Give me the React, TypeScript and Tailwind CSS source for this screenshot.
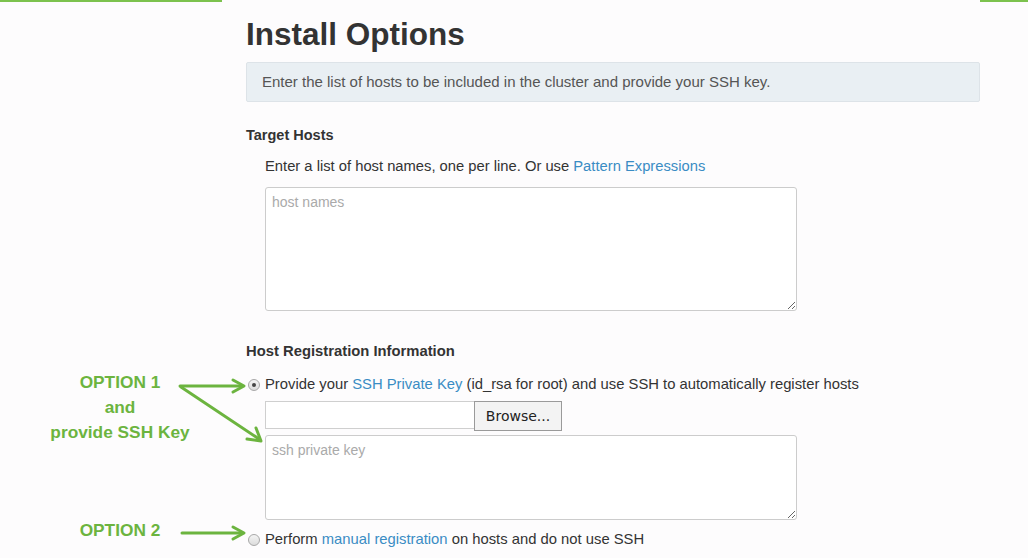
import React from "react";

function Radio({ checked }: { checked?: boolean }) {
  return (
    <span className="mt-[1px] flex h-[12px] w-[12px] shrink-0 items-center justify-center rounded-full border border-[#a8a8a8] bg-gradient-to-b from-[#f4f4f4] to-[#dcdcdc]">
      {checked && <span className="h-[4px] w-[4px] rounded-full bg-[#444]" />}
    </span>
  );
}

export default function App() {
  return (
    <div className="relative min-h-[558px] w-[1028px] overflow-hidden bg-[#fdfcfd] font-['Liberation_Sans',Arial,sans-serif] text-[#333]">
      <div className="flex justify-between">
        <div className="h-[2px] w-[222px] bg-[#7cc24e]" />
        <div className="h-[2px] w-[48px] bg-[#7cc24e]" />
      </div>

      <div className="grid grid-cols-[246px_734px]">
        <div />
        <div>
          <h1 className="mt-[14px] text-[31.5px] font-bold leading-[36px] text-[#333]">Install Options</h1>
          <div className="mt-[10px] h-[40px] rounded-[2px] border border-[#dde3e8] bg-[#e9eff3] pl-[15px] text-[15px] leading-[38px] text-[#555]">
            Enter the list of hosts to be included in the cluster and provide your SSH key.
          </div>

          <div className="mt-[24px] text-[14.5px] font-bold leading-[18px]">Target Hosts</div>
          <div className="ml-[19px] mt-[13px] text-[14.75px] leading-[18px]">
            Enter a list of host names, one per line. Or use <span className="text-[#3a8cc4]">Pattern Expressions</span>
          </div>
          <textarea
            placeholder="host names"
            className="ml-[19px] mt-[12px] block h-[124px] w-[532px] rounded-[3px] border border-[#cccccc] bg-white px-[6px] py-[5px] text-[14px] leading-[18px] text-[#333] outline-none placeholder:text-[#aaaaaa]"
          />

          <div className="mt-[31px] text-[14.8px] font-bold leading-[18px]">Host Registration Information</div>
        </div>

        <div className="flex flex-col items-center pr-[6px] pt-[10px] text-[17.3px] font-bold leading-[25px] text-[#6cb43f]">
          <div>OPTION 1</div>
          <div>and</div>
          <div>provide SSH Key</div>
        </div>
        <div className="pt-[15px]">
          <label className="ml-[2px] flex items-center gap-[5px] text-[14.8px] leading-[18px]">
            <Radio checked />
            <span>
              Provide your <span className="text-[#3a8cc4]">SSH Private Key</span> (id_rsa for root) and use SSH to automatically register hosts
            </span>
          </label>
          <div className="ml-[19px] mt-[8px] flex items-start">
            <div className="h-[28px] w-[210px] border border-[#cfcfcf] bg-white" />
            <button className="-ml-[1px] h-[30px] w-[88px] border border-[#9a9a9a] bg-[#f3f3f3] font-['DejaVu_Sans',sans-serif] text-[14px] leading-[28px] text-[#222]">
              Browse...
            </button>
          </div>
          <textarea
            placeholder="ssh private key"
            className="ml-[19px] mt-[4px] block h-[85px] w-[532px] rounded-[3px] border border-[#cccccc] bg-white px-[6px] py-[5px] text-[14px] leading-[18px] text-[#333] outline-none placeholder:text-[#aaaaaa]"
          />
        </div>

        <div className="flex flex-col items-center pr-[6px] text-[17.3px] font-bold leading-[25px] text-[#6cb43f]">
          <div className="-mt-[2px]">OPTION 2</div>
        </div>
        <div className="pt-[10px]">
          <label className="ml-[2px] flex items-center gap-[5px] text-[14.8px] leading-[18px]">
            <Radio />
            <span>
              Perform <span className="text-[#3a8cc4]">manual registration</span> on hosts and do not use SSH
            </span>
          </label>
        </div>
      </div>

      <svg className="pointer-events-none absolute inset-0 h-full w-full" viewBox="0 0 1028 558">
        <g fill="none" stroke="#6cb43f" strokeWidth="3" strokeLinecap="round" strokeLinejoin="round">
          <path d="M180 386 L241 386" />
          <path d="M233 380 L244 386 L233 392" />
          <path d="M181 387 L259 439" />
          <path d="M247 439 L261 441 L256 428" />
          <path d="M182 533 L241 533" />
          <path d="M233 527 L244 533 L233 539" />
        </g>
      </svg>
    </div>
  );
}
